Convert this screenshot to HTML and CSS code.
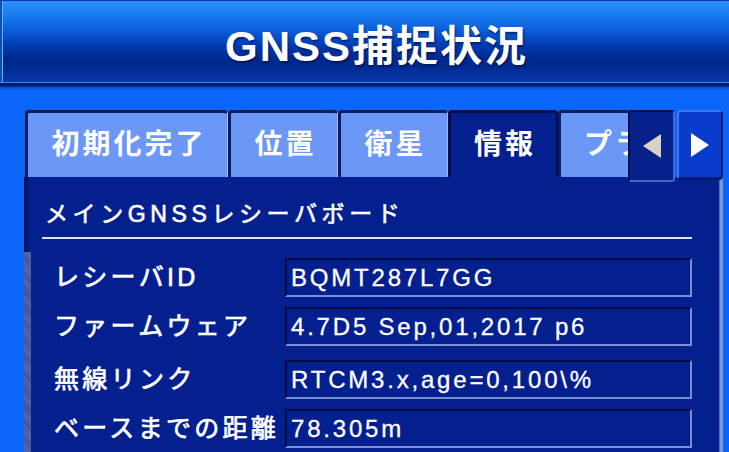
FILE: index.html
```html
<!DOCTYPE html>
<html lang="ja">
<head>
<meta charset="utf-8">
<title>GNSS捕捉状況</title>
<link rel="stylesheet" href="styles.css">
</head>
<body>
<div class="screen">
  <header class="titlebar">
    <h1 class="titlebar__text">GNSS捕捉状況</h1>
  </header>
  <div class="titlebar__sep"></div>
  <main class="body">
    <nav class="tabs">
      <div class="tabs__strip">
        <div class="tab tab--wide">初期化完了</div>
        <div class="tab">位置</div>
        <div class="tab">衛星</div>
        <div class="tab tab--active">情報</div>
        <div class="tab tab--long">プラン</div>
      </div>
      <button class="arrow arrow--prev" type="button" aria-label="前へ">
        <svg width="18" height="24" viewBox="0 0 18 24"><polygon points="18,0 18,24 0,12" fill="#d9d3c4"/></svg>
      </button>
      <button class="arrow arrow--next" type="button" aria-label="次へ">
        <svg width="18" height="24" viewBox="0 0 18 24"><polygon points="0,0 0,24 18,12" fill="#ffffff"/></svg>
      </button>
    </nav>
    <section class="panel">
      <div class="panel__rail"><div class="panel__thumb"></div></div>
      <div class="panel__content">
        <h2 class="panel__title">メインGNSSレシーバボード</h2>
        <div class="rows">
          <div class="row">
            <span class="row__label">レシーバID</span>
            <span class="row__value">BQMT287L7GG</span>
          </div>
          <div class="row">
            <span class="row__label">ファームウェア</span>
            <span class="row__value">4.7D5 Sep,01,2017 p6</span>
          </div>
          <div class="row row--spaced">
            <span class="row__label">無線リンク</span>
            <span class="row__value">RTCM3.x,age=0,100\%</span>
          </div>
          <div class="row">
            <span class="row__label">ベースまでの距離</span>
            <span class="row__value">78.305m</span>
          </div>
        </div>
      </div>
    </section>
  </main>
</div>
</body>
</html>
```
FILE: styles.css
```css
* { box-sizing: border-box; }

html, body {
  margin: 0;
  padding: 0;
  background: #0a66f8;
}

.screen {
  width: 729px;
  height: 452px;
  overflow: hidden;
  background: #0a66f8;
  font-family: "Liberation Sans", "Noto Sans CJK JP", sans-serif;
  color: #ffffff;
}

/* ---------- title bar ---------- */
.titlebar {
  height: 82px;
  border-top: 1px solid #0a36a8;
  border-left: 2px solid #0a4cc4;
  box-shadow: inset 1px 0 0 #6cb2ff;
  background: linear-gradient(to bottom,
    #2a92fa 0px,
    #1a80f2 12px,
    #0a5cd8 30px,
    #003ab0 45px,
    #00288e 58px,
    #002a92 66px,
    #0838a8 80px);
}

.titlebar__text {
  margin: 0;
  padding: 10px 0 0 22px;
  line-height: 72px;
  text-align: center;
  font-size: 42px;
  font-weight: 700;
  letter-spacing: 2px;
  text-shadow: 1px 2px 2px rgba(0, 10, 60, 0.6);
}

.titlebar__sep {
  height: 7px;
  background: linear-gradient(to bottom,
    #4684e4 0px, #4684e4 1px,
    #001a6c 1px, #001a6c 4px,
    #0a46c8 5px, #0a5ae8 7px);
}

/* ---------- body ---------- */
.body {
  padding: 21px 6px 0 24px;
}

.tabs {
  display: flex;
  align-items: flex-start;
  height: 67px;
  margin-left: 1px;
  position: relative;
  z-index: 1;
}

.tabs__strip {
  display: flex;
  flex: 0 0 603px;
  height: 67px;
  overflow: hidden;
}

.tab {
  flex: none;
  width: 110px;
  height: 67px;
  background: #6b97f6;
  border-top: 3px solid #0c1c5c;
  border-left: 3px solid #0c1c5c;
  border-right: 1px solid #9cb8ff;
  border-radius: 4px 4px 0 0;
  padding-left: 3px;
  text-align: center;
  line-height: 64px;
  font-size: 28px;
  font-weight: 700;
  letter-spacing: 3px;
  white-space: nowrap;
}

.tab--wide { width: 203px; }
.tab--long { width: 140px; }

.tab--active {
  background: #04208e;
  border-top-color: #000e48;
  border-left-color: #000e48;
  border-right: 2px solid #000e48;
}

.arrow {
  flex: none;
  display: flex;
  align-items: center;
  justify-content: center;
  padding: 0;
  margin: 0;
  cursor: pointer;
}

.arrow--prev {
  width: 47px;
  height: 72px;
  background: #06208c;
  border-top: 2px solid #000c4a;
  border-left: 2px solid #000c4a;
  border-right: 2px solid #4a66c4;
  border-bottom: 2px solid #4a66c4;
  border-radius: 3px;
}

.arrow--next {
  width: 46px;
  height: 70px;
  margin-left: 2px;
  background: #0a3ccc;
  border-top: 2px solid #4474f2;
  border-left: 2px solid #4474f2;
  border-right: 2px solid #001c74;
  border-bottom: 3px solid #001c74;
  border-radius: 4px;
}

/* ---------- panel ---------- */
.panel {
  display: flex;
  height: 290px;
  background: #04208e;
  border-right: 3px solid #8494cc;
  box-shadow: inset -1px 0 0 #5a6cb4;
}

.panel__rail {
  flex: 0 0 7px;
  background: linear-gradient(to right, #000c50, #021a7c 4px, #04208e);
}

.panel__thumb {
  margin-top: 75px;
  height: 215px;
  background: repeating-linear-gradient(45deg,
    #5d6ba8 0px, #5d6ba8 1px,
    #3e4e96 1px, #3e4e96 2px);
}

.panel__content {
  flex: 1;
  padding: 0 28px 0 11px;
}

.panel__title {
  margin: 22px 0 0;
  padding: 0 0 8px 3px;
  line-height: 30px;
  font-size: 23px;
  font-weight: 400;
  -webkit-text-stroke: 0.6px #ffffff;
  letter-spacing: 4.6px;
  border-bottom: 2px solid #dde0f2;
  white-space: nowrap;
}

.rows {
  display: flex;
  flex-direction: column;
  gap: 10px;
  margin-top: 19px;
}

.row {
  display: flex;
  height: 39px;
}

.row--spaced { margin-top: 4px; }

.row__label {
  flex: 0 0 243px;
  padding-left: 12px;
  line-height: 39px;
  font-size: 25px;
  font-weight: 400;
  -webkit-text-stroke: 0.7px #ffffff;
  letter-spacing: 3.3px;
  white-space: nowrap;
}

.row__value {
  flex: 1;
  border-top: 2px solid #000c44;
  border-left: 2px solid #000c44;
  border-bottom: 2px solid #7c8ed2;
  border-right: 2px solid #7c8ed2;
  padding-left: 4px;
  line-height: 35px;
  font-size: 24px;
  -webkit-text-stroke: 0.3px #ffffff;
  letter-spacing: 2.8px;
  white-space: nowrap;
}
```
